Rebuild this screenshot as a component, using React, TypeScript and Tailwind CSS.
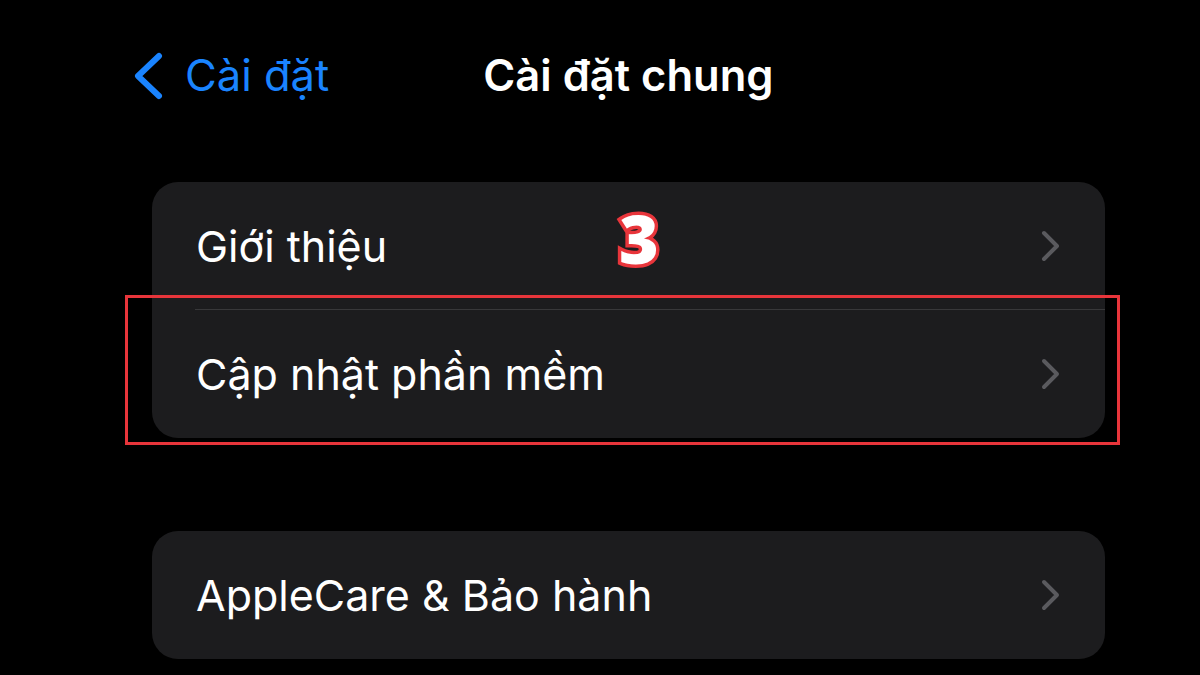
import React from "react";

const font = { fontFamily: "Inter, 'Noto Sans', sans-serif" };

function Chevron() {
  return (
    <svg width="20" height="32" viewBox="0 0 20 32" fill="none" className="shrink-0">
      <path d="M3 3 L16 16 L3 29" stroke="#5a5a5e" strokeWidth="4" strokeLinecap="round" strokeLinejoin="round" />
    </svg>
  );
}

function Row({ label, last }: { label: string; last?: boolean }) {
  return (
    <div className="relative flex h-[128px] items-center justify-between pl-[44px] pr-[44px]">
      <span className="text-[43px] text-white">{label}</span>
      <Chevron />
      {!last && <div className="absolute bottom-0 left-[43px] right-0 h-px bg-[#38383a]" />}
    </div>
  );
}

export default function App() {
  return (
    <div className="relative h-[675px] w-[1200px] overflow-hidden bg-black" style={font}>
      <header className="flex h-[152px] items-center pl-[131px]">
        <div className="flex items-center gap-[20px] text-[#1a84ff]">
          <svg width="34" height="48" viewBox="0 0 34 48" fill="none">
            <path d="M28 4 L7 24 L28 44" stroke="#1a84ff" strokeWidth="6" strokeLinecap="round" strokeLinejoin="round" />
          </svg>
          <span className="text-[43.5px]">Cài đặt</span>
        </div>
        <h1 className="ml-[154px] text-[43.5px] font-semibold text-white">Cài đặt chung</h1>
      </header>

      <div className="ml-[152px] mt-[30px] w-[953px] overflow-hidden rounded-[26px] bg-[#1c1c1e]">
        <Row label="Giới thiệu" />
        <Row label="Cập nhật phần mềm" last />
      </div>

      <div className="ml-[152px] mt-[93px] w-[953px] overflow-hidden rounded-[26px] bg-[#1c1c1e]">
        <Row label="AppleCare & Bảo hành" last />
      </div>

      {/* annotation overlay */}
      <div className="pointer-events-none absolute left-[125px] top-[295px] h-[150px] w-[995px] border-[3px] border-[#e8353b]" />
      <div
        className="pointer-events-none absolute left-[619px] top-[204px] text-[68px] font-extrabold leading-none text-white [-webkit-text-stroke:7px_#e8353b] [paint-order:stroke_fill]"
        style={{ fontFamily: "'Open Sans', sans-serif" }}
      >
        3
      </div>
    </div>
  );
}
